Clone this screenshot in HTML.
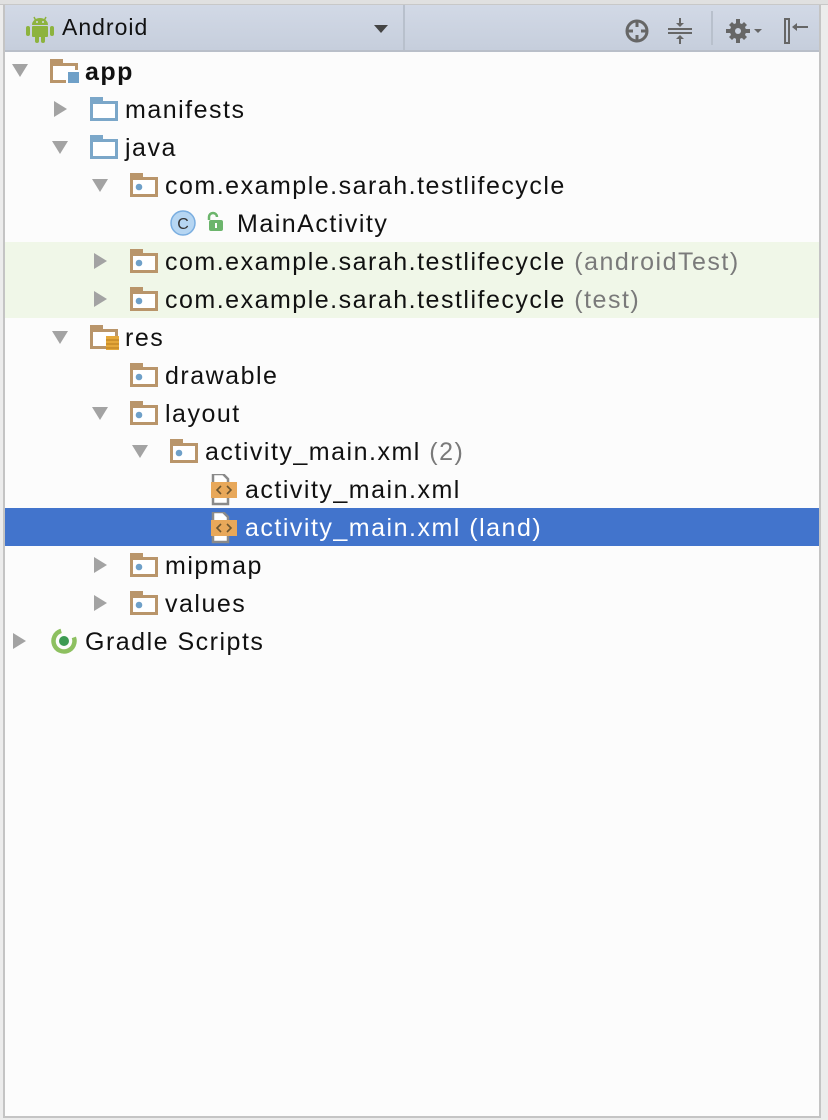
<!DOCTYPE html>
<html><head><meta charset="utf-8"><style>
*{margin:0;padding:0;box-sizing:border-box}
body{width:828px;height:1120px;background:#ececec;position:relative;overflow:hidden;font-family:"Liberation Sans",sans-serif}
#top{position:absolute;left:0;top:0;width:828px;height:5px;background:#e0e0e0;border-bottom:1px solid #c8c8c8}
#panel{position:absolute;left:3px;top:5px;width:818px;height:1113px;background:#fcfcfc;border-left:2px solid #c4c4c4;border-right:2px solid #c4c4c4;border-bottom:2px solid #c4c4c4}
#hdr{position:absolute;left:5px;top:5px;width:814px;height:47px;background:linear-gradient(#d2d9e6,#c6cedc);border-bottom:2px solid #b9bfc9}
.row{position:absolute;left:5px;width:814px;height:38px;font-size:25px;line-height:40px;color:#111;white-space:nowrap;letter-spacing:1.5px}
.row span.t{position:absolute;top:0}
.g{color:#7a7a7a}
svg{position:absolute}
</style></head><body>
<div id="top"></div>
<div id="panel"></div>
<div id="hdr">
<svg style="left:20px;top:9px" width="30" height="30" viewBox="0 0 30 30"><g fill="#8db33e"><path d="M7 11a8 7 0 0 1 16 0z"/><rect x="7" y="12" width="16" height="11" rx="1"/><rect x="1" y="12" width="4" height="10" rx="2"/><rect x="25" y="12" width="4" height="10" rx="2"/><rect x="10" y="21" width="4" height="8" rx="2"/><rect x="16" y="21" width="4" height="8" rx="2"/><path d="M9 3l2 4M21 3l-2 4" stroke="#8db33e" stroke-width="1.5"/></g><circle cx="12" cy="8" r="1" fill="#d0d8e5"/><circle cx="18" cy="8" r="1" fill="#d0d8e5"/></svg>
<span style="position:absolute;left:57px;top:9px;font-size:23px;color:#111;letter-spacing:1px">Android</span>
<svg style="left:369px;top:20px" width="14" height="8"><path d="M0 0h14L7 8z" fill="#444"/></svg>
<div style="position:absolute;left:398px;top:0;width:2px;height:45px;background:#b8c0cc"></div>
<svg style="left:619px;top:13px" width="26" height="26" viewBox="0 0 26 26"><circle cx="13" cy="13" r="10" fill="none" stroke="#666" stroke-width="3"/><path d="M13 2v7M13 17v7M2 13h7M17 13h7" stroke="#666" stroke-width="3"/></svg>
<svg style="left:663px;top:13px" width="24" height="26" viewBox="0 0 24 26"><path d="M0 11h24M0 15h24" stroke="#666" stroke-width="2"/><path d="M12 0v8M12 18v8" stroke="#666" stroke-width="2"/><path d="M8 5l4 4 4-4M8 21l4-4 4 4" fill="#666"/></svg>
<div style="position:absolute;left:706px;top:6px;width:2px;height:34px;background:#b8c0cc"></div>
<svg style="left:720px;top:13px" width="40" height="26" viewBox="0 0 40 26"><g fill="#666"><circle cx="13" cy="13" r="8"/><path d="M11 1h4v24h-4zM1 11h24v4H1z"/><path d="M4 7l3-3 15 15-3 3zM19 4l3 3-15 15-3-3z"/></g><circle cx="13" cy="13" r="3" fill="#cbd2df"/><path d="M29 11h8l-4 4z" fill="#666"/></svg>
<svg style="left:777px;top:12px" width="28" height="28" viewBox="0 0 28 28"><rect x="3" y="2" width="4" height="24" fill="none" stroke="#666" stroke-width="2"/><path d="M12 10h14" stroke="#666" stroke-width="2"/><path d="M10 10l5-4v8z" fill="#666"/></svg>
</div>

<div style="position:absolute;left:5px;top:242px;width:814px;height:76px;background:#f0f7e8"></div>
<div style="position:absolute;left:5px;top:508px;width:814px;height:38px;background:#4274cc"></div>

<svg width="0" height="0" style="position:absolute">
<defs>
<g id="pk"><path d="M0 0h13v4h15v20H0z" fill="#b9956a"/><rect x="3" y="7" width="22" height="14" fill="#fff"/><circle cx="9" cy="14" r="3.3" fill="#6fa0c8"/></g>
<g id="bf"><path d="M0 0h13v4h15v20H0z" fill="#7ba7c9"/><rect x="3" y="7" width="22" height="14" fill="#fff"/></g>
<g id="dn"><path d="M0 0h16L8 13z" fill="#a3a3a3"/></g>
<g id="rt"><path d="M0 0v16l13-8z" fill="#a3a3a3"/></g>
<g id="xml"><path d="M2 0h10l5 5v25H2z" fill="#fff" stroke="#8a8a8a" stroke-width="2.5"/><rect x="0" y="8" width="26" height="16" fill="#e8a85a"/><path d="M10 12l-4 4 4 4M16 12l4 4-4 4" fill="none" stroke="#6b5530" stroke-width="1.6"/></g>
</defs></svg>

<svg style="left:12px;top:64px" width="16" height="13"><use href="#dn"/></svg>
<svg style="left:50px;top:59px" width="32" height="28"><path d="M0 0h13v4h15v20H0z" fill="#b9956a"/><rect x="3" y="7" width="22" height="14" fill="#fff"/><rect x="16" y="11" width="13" height="13" fill="#fff"/><rect x="18" y="13" width="11" height="11" fill="#6fa0c8"/></svg>
<div class="row" style="top:52px"><span class="t" style="left:80px;font-weight:bold">app</span></div>
<svg style="left:54px;top:101px" width="13" height="16"><use href="#rt"/></svg>
<svg style="left:90px;top:97px" width="28" height="24"><use href="#bf"/></svg>
<div class="row" style="top:90px"><span class="t" style="left:120px">manifests</span></div>
<svg style="left:52px;top:141px" width="16" height="13"><use href="#dn"/></svg>
<svg style="left:90px;top:135px" width="28" height="24"><use href="#bf"/></svg>
<div class="row" style="top:128px"><span class="t" style="left:120px">java</span></div>
<svg style="left:92px;top:179px" width="16" height="13"><use href="#dn"/></svg>
<svg style="left:130px;top:173px" width="28" height="24"><use href="#pk"/></svg>
<div class="row" style="top:166px"><span class="t" style="left:160px">com.example.sarah.testlifecycle</span></div>
<svg style="left:170px;top:209px" width="28" height="28"><circle cx="13" cy="14" r="12" fill="#b6d6f2" stroke="#7aaee0" stroke-width="1.5"/><text x="13" y="20" font-size="16" text-anchor="middle" fill="#333" font-family="Liberation Sans">C</text></svg>
<svg style="left:205px;top:211px" width="20" height="22"><path d="M4 9V6a4 4 0 0 1 8 0" fill="none" stroke="#6cb56c" stroke-width="2.5"/><rect x="4" y="9" width="14" height="11" rx="2" fill="#6cb56c"/><rect x="10" y="12" width="2" height="5" fill="#fff"/></svg>
<div class="row" style="top:204px"><span class="t" style="left:232px">MainActivity</span></div>
<svg style="left:94px;top:253px" width="13" height="16"><use href="#rt"/></svg>
<svg style="left:130px;top:249px" width="28" height="24"><use href="#pk"/></svg>
<div class="row" style="top:242px"><span class="t" style="left:160px">com.example.sarah.testlifecycle <span class="g">(androidTest)</span></span></div>
<svg style="left:94px;top:291px" width="13" height="16"><use href="#rt"/></svg>
<svg style="left:130px;top:287px" width="28" height="24"><use href="#pk"/></svg>
<div class="row" style="top:280px"><span class="t" style="left:160px">com.example.sarah.testlifecycle <span class="g">(test)</span></span></div>
<svg style="left:52px;top:331px" width="16" height="13"><use href="#dn"/></svg>
<svg style="left:90px;top:325px" width="32" height="26"><path d="M0 0h13v4h15v20H0z" fill="#b9956a"/><rect x="3" y="7" width="22" height="14" fill="#fff"/><rect x="16" y="11" width="13" height="14" fill="#e5a83a"/><path d="M16 15h13M16 19h13M16 23h13" stroke="#b57a1e" stroke-width="1"/></svg>
<div class="row" style="top:318px"><span class="t" style="left:120px">res</span></div>
<svg style="left:130px;top:363px" width="28" height="24"><use href="#pk"/></svg>
<div class="row" style="top:356px"><span class="t" style="left:160px">drawable</span></div>
<svg style="left:92px;top:407px" width="16" height="13"><use href="#dn"/></svg>
<svg style="left:130px;top:401px" width="28" height="24"><use href="#pk"/></svg>
<div class="row" style="top:394px"><span class="t" style="left:160px">layout</span></div>
<svg style="left:132px;top:445px" width="16" height="13"><use href="#dn"/></svg>
<svg style="left:170px;top:439px" width="28" height="24"><use href="#pk"/></svg>
<div class="row" style="top:432px"><span class="t" style="left:200px">activity_main.xml <span class="g">(2)</span></span></div>
<svg style="left:211px;top:474px" width="28" height="32"><use href="#xml"/></svg>
<div class="row" style="top:470px"><span class="t" style="left:240px">activity_main.xml</span></div>
<svg style="left:211px;top:512px" width="28" height="32"><use href="#xml"/></svg>
<div class="row" style="top:508px;color:#fff"><span class="t" style="left:240px">activity_main.xml (land)</span></div>
<svg style="left:94px;top:557px" width="13" height="16"><use href="#rt"/></svg>
<svg style="left:130px;top:553px" width="28" height="24"><use href="#pk"/></svg>
<div class="row" style="top:546px"><span class="t" style="left:160px">mipmap</span></div>
<svg style="left:94px;top:595px" width="13" height="16"><use href="#rt"/></svg>
<svg style="left:130px;top:591px" width="28" height="24"><use href="#pk"/></svg>
<div class="row" style="top:584px"><span class="t" style="left:160px">values</span></div>
<svg style="left:13px;top:633px" width="13" height="16"><use href="#rt"/></svg>
<svg style="left:50px;top:627px" width="28" height="28"><circle cx="14" cy="14" r="10.5" fill="none" stroke="#8dc060" stroke-width="4.5" stroke-dasharray="50 16" transform="rotate(-20 14 14)"/><circle cx="14" cy="14" r="5" fill="#3c9a52"/></svg>
<div class="row" style="top:622px"><span class="t" style="left:80px">Gradle Scripts</span></div>
</body></html>
